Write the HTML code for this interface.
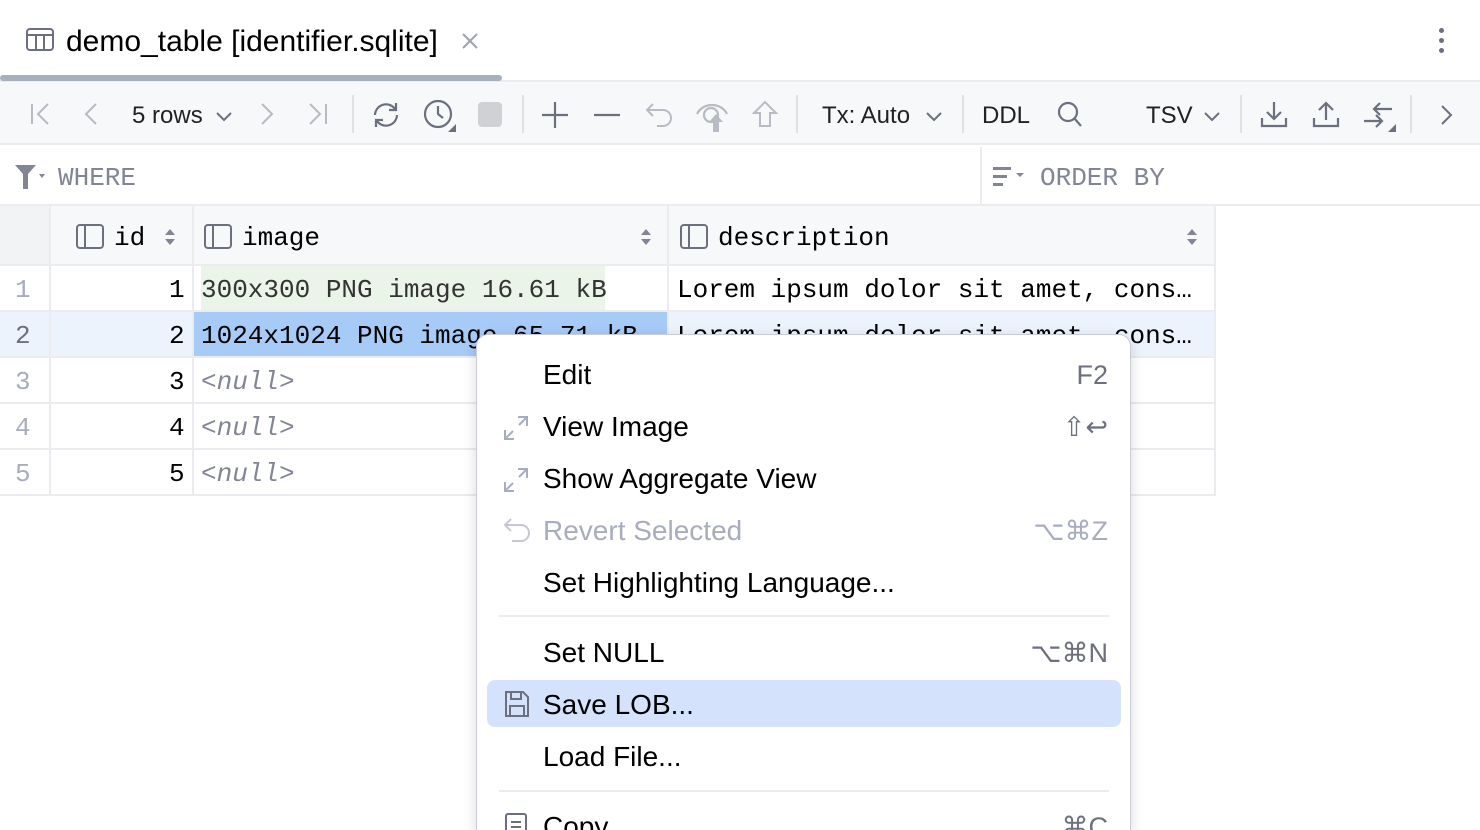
<!DOCTYPE html>
<html style="width:1480px;height:830px;overflow:hidden"><head><meta charset="utf-8"><style>
*{margin:0;padding:0;box-sizing:border-box}
body{width:1480px;height:830px;overflow:hidden;background:#fff;position:relative;font-family:"Liberation Sans",sans-serif;color:#000}
.a{position:absolute}
.mono{font-family:"Liberation Mono","DejaVu Sans Mono",monospace;font-size:26px}
.t{white-space:nowrap}
svg{position:absolute;overflow:visible}
.mi{position:absolute;left:543px;font-size:28px;white-space:nowrap}
.sc{position:absolute;right:22px;font-size:27px;color:#6c707e;white-space:nowrap}
</style></head><body>
<!-- tab bar -->
<svg style="left:26px;top:28px" width="28" height="24" viewBox="0 0 28 24"><rect x="1" y="1" width="26" height="21" rx="3" fill="none" stroke="#6c707e" stroke-width="2"/><line x1="1" y1="7" x2="27" y2="7" stroke="#6c707e" stroke-width="2"/><line x1="10" y1="7" x2="10" y2="22" stroke="#6c707e" stroke-width="2"/><line x1="18" y1="7" x2="18" y2="22" stroke="#6c707e" stroke-width="2"/></svg>
<div class="a t" style="left:66px;top:25px;font-size:30px">demo_table [identifier.sqlite]</div>
<svg style="left:462px;top:33px" width="16" height="16"><path d="M1 1L15 15M15 1L1 15" stroke="#9ea2ad" stroke-width="2"/></svg>
<div class="a" style="left:1439px;top:28px;width:5px;height:5px;border-radius:3px;background:#6c707e"></div>
<div class="a" style="left:1439px;top:38px;width:5px;height:5px;border-radius:3px;background:#6c707e"></div>
<div class="a" style="left:1439px;top:48px;width:5px;height:5px;border-radius:3px;background:#6c707e"></div>
<div class="a" style="left:0;top:80px;width:1480px;height:2px;background:#ebecf0"></div>
<div class="a" style="left:0;top:75px;width:502px;height:6px;border-radius:3px;background:#a8afbe"></div>
<!-- toolbar -->
<div class="a" style="left:0;top:82px;width:1480px;height:63px;background:#f7f8fa;border-bottom:2px solid #ebecf0"></div>
<svg style="left:30px;top:102px" width="20" height="24"><path d="M2 2V22M18 2L8 12L18 22" stroke="#b8bbc3" stroke-width="2" fill="none"/></svg>
<svg style="left:84px;top:102px" width="14" height="24"><path d="M12 2L2 12L12 22" stroke="#b8bbc3" stroke-width="2" fill="none"/></svg>
<div class="a t" style="left:132px;top:102px;font-size:24px;color:#222">5 rows</div>
<svg style="left:215px;top:111px" width="18" height="12"><path d="M2 2L9 9L16 2" stroke="#6c707e" stroke-width="2" fill="none"/></svg>
<svg style="left:260px;top:102px" width="14" height="24"><path d="M2 2L12 12L2 22" stroke="#b8bbc3" stroke-width="2" fill="none"/></svg>
<svg style="left:308px;top:102px" width="20" height="24"><path d="M18 2V22M2 2L12 12L2 22" stroke="#b8bbc3" stroke-width="2" fill="none"/></svg>
<div class="a" style="left:352px;top:95px;width:2px;height:38px;background:#e0e1e5"></div>
<svg style="left:369px;top:99px" width="34" height="32"><path d="M6 16A11 11 0 0 1 26 10M28 16A11 11 0 0 1 8 22" stroke="#6c707e" stroke-width="2.2" fill="none"/><path d="M27 4V11H20M7 28V21H14" stroke="#6c707e" stroke-width="2.2" fill="none"/></svg>
<svg style="left:423px;top:99px" width="36" height="34"><circle cx="15" cy="15" r="13" stroke="#6c707e" stroke-width="2.2" fill="none"/><path d="M15 7V15L20 19" stroke="#6c707e" stroke-width="2.2" fill="none"/><path d="M33 25V33H25Z" fill="#6c707e"/></svg>
<div class="a" style="left:478px;top:102px;width:24px;height:25px;border-radius:4px;background:#d0d1d5"></div>
<div class="a" style="left:522px;top:95px;width:2px;height:38px;background:#e0e1e5"></div>
<svg style="left:541px;top:101px" width="28" height="28"><path d="M14 1V27M1 14H27" stroke="#6c707e" stroke-width="2.2"/></svg>
<svg style="left:593px;top:101px" width="28" height="28"><path d="M1 14H27" stroke="#6c707e" stroke-width="2.2"/></svg>
<svg style="left:645px;top:102px" width="30" height="26"><path d="M8 2L2 8L8 14M2 8H18A8 8 0 0 1 18 24H12" stroke="#b8bbc3" stroke-width="2" fill="none"/></svg>
<svg style="left:695px;top:100px" width="36" height="32"><path d="M2 14C8 2 26 2 32 14" stroke="#b8bbc3" stroke-width="2.2" fill="none"/><circle cx="16" cy="15" r="7" stroke="#b8bbc3" stroke-width="2.2" fill="none"/><path d="M18 32V22H14L21 14L28 22H24V32Z" fill="#b8bbc3"/></svg>
<svg style="left:752px;top:100px" width="26" height="28"><path d="M13 2L2 13H8V26H18V13H24Z" stroke="#b8bbc3" stroke-width="2" fill="none"/></svg>
<div class="a" style="left:796px;top:95px;width:2px;height:38px;background:#e0e1e5"></div>
<div class="a t" style="left:822px;top:102px;font-size:24px;color:#222">Tx: Auto</div>
<svg style="left:925px;top:111px" width="18" height="12"><path d="M2 2L9 9L16 2" stroke="#6c707e" stroke-width="2" fill="none"/></svg>
<div class="a" style="left:962px;top:95px;width:2px;height:38px;background:#e0e1e5"></div>
<div class="a t" style="left:982px;top:102px;font-size:24px;color:#222">DDL</div>
<svg style="left:1057px;top:101px" width="26" height="26"><circle cx="11" cy="11" r="9" stroke="#6c707e" stroke-width="2.2" fill="none"/><path d="M17 17L24 25" stroke="#6c707e" stroke-width="2.2"/></svg>
<div class="a t" style="left:1146px;top:102px;font-size:24px;color:#222">TSV</div>
<svg style="left:1203px;top:111px" width="18" height="12"><path d="M2 2L9 9L16 2" stroke="#6c707e" stroke-width="2" fill="none"/></svg>
<div class="a" style="left:1240px;top:95px;width:2px;height:38px;background:#e0e1e5"></div>
<svg style="left:1260px;top:100px" width="28" height="28"><path d="M14 2V19M7 12L14 19L21 12M2 18V26H26V18" stroke="#6c707e" stroke-width="2.2" fill="none"/></svg>
<svg style="left:1312px;top:100px" width="28" height="28"><path d="M14 20V3M7 10L14 3L21 10M2 18V26H26V18" stroke="#6c707e" stroke-width="2.2" fill="none"/></svg>
<svg style="left:1362px;top:100px" width="36" height="34"><path d="M12 9H30M18 3L12 9L18 15M2 21H20M14 15L20 21L14 27" stroke="#6c707e" stroke-width="2.2" fill="none"/><path d="M34 24V32H26Z" fill="#6c707e"/></svg>
<div class="a" style="left:1410px;top:95px;width:2px;height:38px;background:#e0e1e5"></div>
<svg style="left:1440px;top:104px" width="14" height="22"><path d="M2 2L11 11L2 20" stroke="#6c707e" stroke-width="2" fill="none"/></svg>
<!-- filter row -->
<svg style="left:14px;top:164px" width="32" height="26"><path d="M1 1H22L14 10V25H9V10Z" fill="#818594"/><path d="M25 10H31L28 14Z" fill="#818594"/></svg>
<div class="a t mono" style="left:58px;top:163px;color:#818594">WHERE</div>
<div class="a" style="left:980px;top:147px;width:2px;height:58px;background:#ebecf0"></div>
<svg style="left:993px;top:166px" width="34" height="22"><rect x="0" y="1" width="18" height="3" fill="#818594"/><rect x="0" y="9" width="14" height="3" fill="#818594"/><rect x="0" y="17" width="10" height="3" fill="#818594"/><path d="M23 7H31L27 11Z" fill="#818594"/></svg>
<div class="a t mono" style="left:1040px;top:163px;color:#818594">ORDER BY</div>
<div class="a" style="left:0;top:204px;width:1480px;height:2px;background:#ebecf0"></div>
<!-- table -->
<div class="a" style="left:0;top:206px;width:50px;height:59px;background:#f2f3f5"></div>
<div class="a" style="left:50px;top:206px;width:1165px;height:59px;background:#f7f8fa"></div>
<div class="a" style="left:0;top:264px;width:1215px;height:2px;background:#ebecf0"></div>
<div class="a" style="left:0;top:312px;width:1215px;height:45px;background:#edf3fd"></div>
<div class="a" style="left:201px;top:266px;width:404px;height:45px;background:#eaf4e8"></div>
<div class="a" style="left:194px;top:312px;width:474px;height:45px;background:#a6cbf7"></div>
<div class="a" style="left:0;top:310px;width:1215px;height:2px;background:#ebecf0"></div>
<div class="a" style="left:0;top:356px;width:1215px;height:2px;background:#ebecf0"></div>
<div class="a" style="left:0;top:402px;width:1215px;height:2px;background:#ebecf0"></div>
<div class="a" style="left:0;top:448px;width:1215px;height:2px;background:#ebecf0"></div>
<div class="a" style="left:0;top:494px;width:1215px;height:2px;background:#ebecf0"></div>
<div class="a" style="left:49px;top:206px;width:2px;height:290px;background:#ebecf0"></div>
<div class="a" style="left:192px;top:206px;width:2px;height:290px;background:#ebecf0"></div>
<div class="a" style="left:667px;top:206px;width:2px;height:290px;background:#ebecf0"></div>
<div class="a" style="left:1214px;top:206px;width:2px;height:290px;background:#ebecf0"></div>
<!-- header -->
<svg style="left:76px;top:224px" width="28" height="26"><rect x="1" y="1" width="26" height="23" rx="3" stroke="#6c707e" stroke-width="2" fill="none"/><line x1="9" y1="1" x2="9" y2="24" stroke="#6c707e" stroke-width="2"/></svg>
<div class="a t mono" style="left:114px;top:223px">id</div>
<svg style="left:164px;top:228px" width="12" height="18"><path d="M1 7L6 1L11 7ZM1 11L6 17L11 11Z" fill="#818594"/></svg>
<svg style="left:204px;top:224px" width="28" height="26"><rect x="1" y="1" width="26" height="23" rx="3" stroke="#6c707e" stroke-width="2" fill="none"/><line x1="9" y1="1" x2="9" y2="24" stroke="#6c707e" stroke-width="2"/></svg>
<div class="a t mono" style="left:242px;top:223px">image</div>
<svg style="left:640px;top:228px" width="12" height="18"><path d="M1 7L6 1L11 7ZM1 11L6 17L11 11Z" fill="#818594"/></svg>
<svg style="left:680px;top:224px" width="28" height="26"><rect x="1" y="1" width="26" height="23" rx="3" stroke="#6c707e" stroke-width="2" fill="none"/><line x1="9" y1="1" x2="9" y2="24" stroke="#6c707e" stroke-width="2"/></svg>
<div class="a t mono" style="left:718px;top:223px">description</div>
<svg style="left:1186px;top:228px" width="12" height="18"><path d="M1 7L6 1L11 7ZM1 11L6 17L11 11Z" fill="#818594"/></svg>
<!-- rows -->
<div class="a t mono" style="left:15px;top:275px;color:#a8adbd">1</div>
<div class="a t mono" style="left:15px;top:321px;color:#6c707e">2</div>
<div class="a t mono" style="left:15px;top:367px;color:#a8adbd">3</div>
<div class="a t mono" style="left:15px;top:413px;color:#a8adbd">4</div>
<div class="a t mono" style="left:15px;top:459px;color:#a8adbd">5</div>
<div class="a t mono" style="left:169px;top:275px">1</div>
<div class="a t mono" style="left:169px;top:321px">2</div>
<div class="a t mono" style="left:169px;top:367px">3</div>
<div class="a t mono" style="left:169px;top:413px">4</div>
<div class="a t mono" style="left:169px;top:459px">5</div>
<div class="a t mono" style="left:201px;top:275px;color:#333">300x300 PNG image 16.61 kB</div>
<div class="a t mono" style="left:201px;top:321px">1024x1024 PNG image 65.71 kB</div>
<div class="a t mono" style="left:201px;top:367px;color:#818594;font-style:italic">&lt;null&gt;</div>
<div class="a t mono" style="left:201px;top:413px;color:#818594;font-style:italic">&lt;null&gt;</div>
<div class="a t mono" style="left:201px;top:459px;color:#818594;font-style:italic">&lt;null&gt;</div>
<div class="a t mono" style="left:677px;top:275px">Lorem ipsum dolor sit amet, cons…</div>
<div class="a t mono" style="left:677px;top:321px">Lorem ipsum dolor sit amet, cons…</div>
<!-- menu -->
<div class="a" style="left:476px;top:334px;width:655px;height:496px;background:#fff;border:1px solid #c9ccd6;border-bottom:none;border-radius:12px 12px 0 0;box-shadow:0 4px 14px rgba(0,0,0,.15);overflow:hidden">
<div class="mi" style="left:66px;top:24px">Edit</div><div class="sc" style="top:25px">F2</div>
<svg style="left:24px;top:78px" width="30" height="30"><path d="M4 26L12 18M18 12L26 4M17 4H26V13M4 17V26H13" stroke="#a8adbd" stroke-width="2" fill="none"/></svg>
<div class="mi" style="left:66px;top:76px">View Image</div><div class="sc" style="top:77px">⇧↩</div>
<svg style="left:24px;top:130px" width="30" height="30"><path d="M4 26L12 18M18 12L26 4M17 4H26V13M4 17V26H13" stroke="#a8adbd" stroke-width="2" fill="none"/></svg>
<div class="mi" style="left:66px;top:128px">Show Aggregate View</div>
<svg style="left:26px;top:182px" width="30" height="28"><path d="M8 2L2 8L8 14M2 8H18A8 8 0 0 1 18 24H9" stroke="#c5c8d0" stroke-width="2" fill="none"/></svg>
<div class="mi" style="left:66px;top:180px;color:#a8adbd">Revert Selected</div><div class="sc" style="top:181px;color:#a8adbd">⌥⌘Z</div>
<div class="mi" style="left:66px;top:232px">Set Highlighting Language...</div>
<div class="a" style="left:22px;top:280px;width:610px;height:2px;background:#ebecf0"></div>
<div class="mi" style="left:66px;top:302px">Set NULL</div><div class="sc" style="top:303px">⌥⌘N</div>
<div class="a" style="left:10px;top:345px;width:634px;height:47px;border-radius:8px;background:#d4e2fc"></div>
<svg style="left:28px;top:356px" width="24" height="26"><path d="M1 1H18L23 6V25H1Z" stroke="#6c707e" stroke-width="2" fill="none"/><path d="M6 1V8H16V1M5 25V15H19V25" stroke="#6c707e" stroke-width="2" fill="none"/></svg>
<div class="mi" style="left:66px;top:354px">Save LOB...</div>
<div class="mi" style="left:66px;top:406px">Load File...</div>
<div class="a" style="left:22px;top:455px;width:610px;height:2px;background:#ebecf0"></div>
<svg style="left:28px;top:476px" width="24" height="26"><rect x="1" y="3" width="20" height="24" rx="2" stroke="#6c707e" stroke-width="2" fill="none"/><path d="M6 11H16M6 16H16M6 21H16" stroke="#6c707e" stroke-width="2"/></svg>
<div class="mi" style="left:66px;top:476px">Copy</div><div class="sc" style="top:477px">⌘C</div>
</div>
</body></html>
